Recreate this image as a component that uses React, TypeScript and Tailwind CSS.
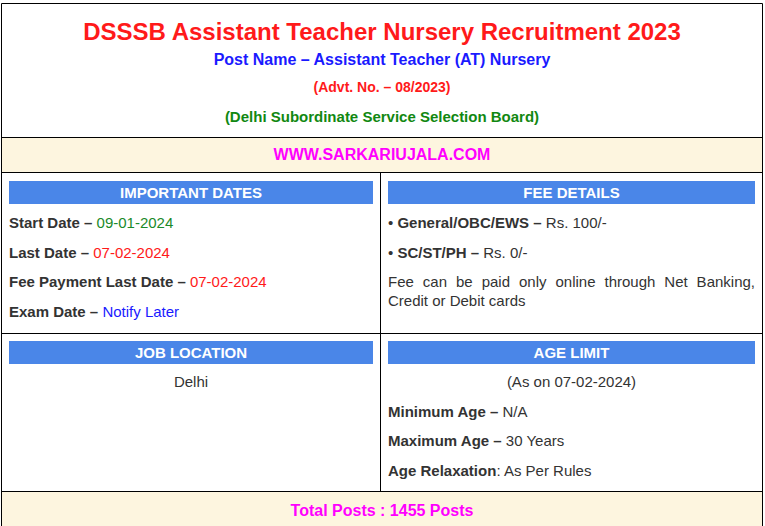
const font = { fontFamily: '"Liberation Sans", Arial, sans-serif' }

function Bar({ children, gap = 'mb-[9px]' }: { children: React.ReactNode; gap?: string }) {
  return (
    <div className={`h-[23px] bg-[#4a86e8] text-white font-bold text-[15px] leading-[23px] text-center ${gap}`}>
      {children}
    </div>
  )
}

function Line({ children, center }: { children: React.ReactNode; center?: boolean }) {
  return (
    <p className={`text-[15px] leading-[19.5px] mb-[10px] text-[#333] ${center ? 'text-center' : ''}`}>
      {children}
    </p>
  )
}

export default function App() {
  return (
    <div className="bg-white w-[765px] h-[526px] overflow-hidden pt-[3px]" style={font}>
      <div className="ml-[1px] w-[762px] border border-black border-t-[#888]">
        <div className="border-t border-black -mt-px"></div>
        <div className="h-[133px] flex flex-col items-center">
          <h1 className="mt-[14px] text-[24px] leading-[28px] font-bold text-[#ff1a1a]">
            DSSSB Assistant Teacher Nursery Recruitment 2023
          </h1>
          <p className="mt-[4px] text-[16px] leading-[20px] font-bold text-[#1a1aff]">
            Post Name – Assistant Teacher (AT) Nursery
          </p>
          <p className="mt-[8px] text-[14px] leading-[18px] font-bold text-[#ff1a1a]">
            (Advt. No. – 08/2023)
          </p>
          <p className="mt-[11px] text-[15px] leading-[19px] font-bold text-[#118811]">
            (Delhi Subordinate Service Selection Board)
          </p>
        </div>
        <div className="h-[35px] border-t border-black bg-[#fdf5df] flex items-center justify-center">
          <span className="text-[16px] font-bold text-[#ff00ff]">WWW.SARKARIUJALA.COM</span>
        </div>
        <div className="grid grid-cols-[379px_1fr] border-t border-black h-[161px]">
          <div className="border-r border-black px-[7px] pt-[8px]">
            <Bar>IMPORTANT DATES</Bar>
            <Line>
              <b>Start Date –</b> <span className="text-[#1a8a2a]">09-01-2024</span>
            </Line>
            <Line>
              <b>Last Date –</b> <span className="text-[#ff1a1a]">07-02-2024</span>
            </Line>
            <Line>
              <b>Fee Payment Last Date –</b> <span className="text-[#ff1a1a]">07-02-2024</span>
            </Line>
            <Line>
              <b>Exam Date –</b> <span className="text-[#1a1aff]">Notify Later</span>
            </Line>
          </div>
          <div className="px-[7px] pt-[8px]">
            <Bar>FEE DETAILS</Bar>
            <Line>
              • <b>General/OBC/EWS –</b> Rs. 100/-
            </Line>
            <Line>
              • <b>SC/ST/PH –</b> Rs. 0/-
            </Line>
            <p className="text-[15px] leading-[19px] text-[#333] text-justify">
              Fee can be paid only online through Net Banking, Credit or Debit cards
            </p>
          </div>
        </div>
        <div className="grid grid-cols-[379px_1fr] border-t border-black h-[158px]">
          <div className="border-r border-black px-[7px] pt-[7px]">
            <Bar gap="mb-[8px]">JOB LOCATION</Bar>
            <Line center>Delhi</Line>
          </div>
          <div className="px-[7px] pt-[7px]">
            <Bar gap="mb-[8px]">AGE LIMIT</Bar>
            <Line center>(As on 07-02-2024)</Line>
            <Line>
              <b>Minimum Age –</b> N/A
            </Line>
            <Line>
              <b>Maximum Age –</b> 30 Years
            </Line>
            <Line>
              <b>Age Relaxation</b>: As Per Rules
            </Line>
          </div>
        </div>
        <div className="h-[40px] border-t border-black bg-[#fdf5df] flex justify-center pt-[9px]">
          <span className="text-[16px] leading-[20px] font-bold text-[#ff00ff]">Total Posts : 1455 Posts</span>
        </div>
      </div>
    </div>
  )
}
